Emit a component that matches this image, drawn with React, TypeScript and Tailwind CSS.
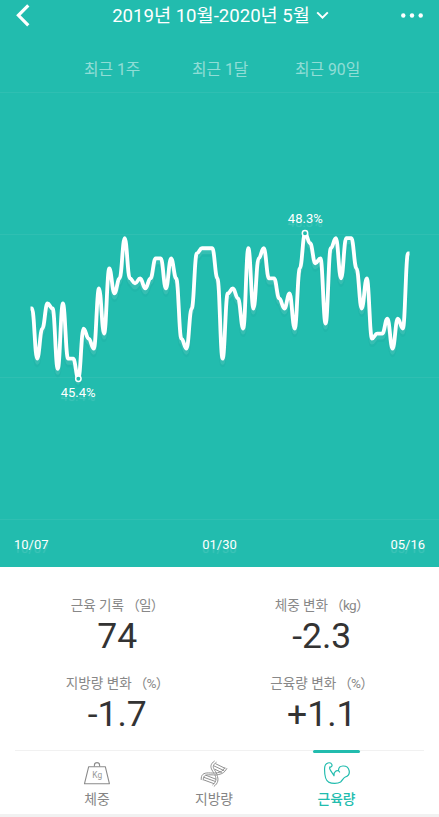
import React from "react";

const values = [
  46.8, 45.8, 46.4, 46.9, 46.8, 45.6, 46.9, 45.8, 45.8, 45.4, 46.4, 46.2, 46.0, 47.2, 46.3,
  47.6, 47.1, 47.4, 48.2, 47.4, 47.3, 47.4, 47.2, 47.4, 47.8, 47.8, 47.2, 47.8, 47.4, 46.2,
  46.0, 46.8, 47.9, 48.0, 48.0, 48.0, 47.4, 45.8, 47.1, 47.2, 47.0, 46.4, 48.0, 46.8, 47.8,
  48.0, 47.4, 47.4, 47.0, 46.8, 47.1, 46.4, 47.6, 48.3, 48.1, 47.7, 47.8, 46.5, 48.0, 48.2,
  47.4, 48.2, 48.2, 47.6, 46.8, 47.4, 46.2, 46.3, 46.3, 46.6, 46.0, 46.6, 46.4, 47.9,
];

const px = (i: number) => 32 + i * 5.151;
// The chart area starts 93px below the top of the screen.
const py = (v: number) => 140.2 + (48.3 - v) * 50.2;

const line = values
  .map((v, i) => {
    if (i === 0) return `M${px(0)} ${py(v)}`;
    const c = 2.2;
    return `C${px(i - 1) + c} ${py(values[i - 1])} ${px(i) - c} ${py(v)} ${px(i)} ${py(v)}`;
  })
  .join(" ");

const labelShadow = "[text-shadow:0_4px_1px_rgba(255,255,255,0.15)]";

function Chart() {
  return (
    <svg width="439" height="427" viewBox="0 0 439 427" className="block overflow-visible">
      {[0, 142, 285, 427].map((y) => (
        <line key={y} x1="0" x2="439" y1={y - 0.5} y2={y - 0.5} stroke="#fff" strokeOpacity="0.06" />
      ))}
      <g fill="none" strokeLinejoin="round">
        <path d={line} stroke="#087f75" strokeOpacity="0.06" strokeWidth="5" transform="translate(0 6)" />
        <path d={line} stroke="#fff" strokeOpacity="0.1" strokeWidth="4" transform="translate(0 4)" />
        <path
          d={`M${px(0) - 1.5} ${py(values[0])}L${line.slice(1)}h1.5`}
          stroke="#fff"
          strokeWidth="3.8"
        />
      </g>
      {[9, 53].map((i) => (
        <circle key={i} cx={px(i)} cy={py(values[i])} r="2.7" fill="#22bcae" stroke="#fff" strokeWidth="1.5" />
      ))}
      <g fill="#fff" fontSize="13" textAnchor="middle" className={labelShadow}>
        <text x="305.3" y="130">48.3%</text>
        <text x="78.2" y="304">45.4%</text>
      </g>
    </svg>
  );
}

function Stat({ label, unit, value, className }: { label: string; unit: string; value: string; className: string }) {
  return (
    <div className={`flex flex-col items-center ${className}`}>
      <span className="text-[13.6px] leading-5 text-[#888] whitespace-nowrap">
        {label}
        <span className="ml-[2px] tracking-[-0.7px]">（{unit}）</span>
      </span>
      <span className="mt-[2px] text-[35.5px] leading-[38px] text-[#333]">{value}</span>
    </div>
  );
}

function WeightIcon() {
  return (
    <svg width="30" height="28" viewBox="0 0 30 28" fill="none" stroke="#8a8a8a" strokeWidth="1.1" strokeLinejoin="round">
      <path d="M6.7 6.7H23.3L27.4 23.7H2.5Z" />
      <path d="M12.4 6.5V5.2a2.6 2.6 0 0 1 5.2 0V6.5" />
      <text x="15.2" y="17.8" fontSize="8.4" textAnchor="middle" fill="#999" stroke="none">Kg</text>
    </svg>
  );
}

function DnaIcon() {
  return (
    <svg width="30" height="28" viewBox="0 0 30 28" fill="none" stroke="#8a8a8a" strokeWidth="0.95" strokeLinecap="round">
      <path d="M2.2 19.5C2 14.5 4.5 12.9 9.5 12.9C15 12.9 22 14.6 25.8 7.8" />
      <path d="M4.2 20C4.2 16 6 14.8 9.5 14.8C16 14.8 24.3 16.2 27.8 8.6" />
      <path d="M15.3 1.2C11.3 3.8 11.3 7 13 10C14.1 12 14.4 12.3 14.6 13" />
      <path d="M17.2 2.4C13.7 4.8 13.7 7 15.2 9.4C16 10.8 17 12.2 17.6 13.6" />
      <path d="M16 15.2C17.8 18.8 17.2 22.2 13.8 24.8M18 15.2C19.9 19.3 19.2 23.4 15.2 26.2" />
      <path d="M16.8 3.8L26 8.3M15.2 6L25 10.6M16 9.3L22.4 12.4" />
      <path d="M7 15.3L16.8 19.2M5.1 17.4L16.2 21.4M5 20L14.8 23.6" />
    </svg>
  );
}

function MuscleIcon() {
  return (
    <svg width="30" height="28" viewBox="0 0 30 28" fill="none" stroke="#22bcae" strokeWidth="1.2" strokeLinecap="round" strokeLinejoin="round">
      <path d="M7.9 7.1C9 7.2 10.3 6.4 10 4.9C9.5 3 7.7 2.4 5.9 3C3.5 3.8 2.7 5.3 2.6 8.2C2.4 14.4 3.8 20.4 6.6 22.1C10 23.8 15.6 23.8 18.6 22C20.4 20.5 21.4 17.7 23.3 17C26.2 16.1 27.7 13.9 27.2 10.9C26.6 7.7 23.8 5.9 20.9 6C18.1 6.1 16.5 7.8 16.5 10.4" />
      <path d="M7.9 7.1C6.9 8.7 8.3 10 9.2 11.4L12 15.8C11.8 13.8 12.4 12 13.6 11.2C15.1 10.2 16.9 10.8 17.6 12" />
    </svg>
  );
}

function Tab({ label, active, className, children }: { label: string; active?: boolean; className: string; children: React.ReactNode }) {
  return (
    <div className={`flex flex-col items-center ${className}`}>
      <div className={`h-[3px] w-[47px] rounded-sm ${active ? "bg-[#22bcae]" : "bg-transparent"}`} />
      <div className="mt-[7px] h-7">{children}</div>
      <span className={`mt-px text-[13.8px] leading-5 ${active ? "font-medium text-[#22bcae]" : "text-[#858585]"}`}>{label}</span>
    </div>
  );
}

export default function App() {
  return (
    <div className="flex h-[817px] w-[439px] flex-col overflow-hidden bg-white font-['Roboto','Noto_Sans_CJK_KR',sans-serif]">
      <header className="h-[567px] shrink-0 bg-[#22bcae] text-white">
        <div className="flex h-[31px] items-center justify-between pr-4 pl-[15px]">
          <svg width="15" height="24" viewBox="0 0 15 24" fill="none" stroke="#fff" strokeWidth="3.2">
            <path d="M13.3 1.3L3.4 11.3L13.3 21.3" />
          </svg>
          <div className="flex items-center gap-[6px] pl-[10px]">
            <span className="pt-px text-[18.6px] leading-[30px] whitespace-nowrap">2019년 10월-2020년 5월</span>
            <svg width="13" height="10" viewBox="0 0 13 10" fill="none" stroke="#fff" strokeWidth="2">
              <path d="M1.2 1.4L6.5 6.6L11.8 1.4" />
            </svg>
          </div>
          <svg width="22" height="6" viewBox="0 0 22 6" fill="#fff">
            <circle cx="2.3" cy="2.5" r="2.2" />
            <circle cx="11" cy="2.5" r="2.2" />
            <circle cx="19.7" cy="2.5" r="2.2" />
          </svg>
        </div>
        <nav className="flex h-[62px] items-center pt-[15px] pl-[84px] text-[15.8px] text-white/50">
          <span className="w-[108px]">최근 1주</span>
          <span className="w-[103px]">최근 1달</span>
          <span>최근 90일</span>
        </nav>
        <Chart />
        <div className={`flex items-center justify-between px-[14px] pt-[15px] text-[13px] leading-5 ${labelShadow}`}>
          <span>10/07</span>
          <span>01/30</span>
          <span>05/16</span>
        </div>
      </header>
      <section className="grid h-[183px] shrink-0 grid-cols-2 content-start gap-y-[18px] pt-7">
        <Stat label="근육 기록" unit="일" value="74" className="pl-[15px]" />
        <Stat label="체중 변화" unit="kg" value="-2.3" className="pr-[15px]" />
        <Stat label="지방량 변화" unit="%" value="-1.7" className="pl-[15px]" />
        <Stat label="근육량 변화" unit="%" value="+1.1" className="pr-[15px]" />
      </section>
      <footer className="h-16 shrink-0 px-[15px]">
        <div className="h-px bg-[#f1f1f1]" />
        <div className="-mt-px flex pl-[22px]">
          <Tab label="체중" className="w-[120px]"><WeightIcon /></Tab>
          <Tab label="지방량" className="w-[114px]"><DnaIcon /></Tab>
          <Tab label="근육량" active className="w-[131px]"><MuscleIcon /></Tab>
        </div>
      </footer>
      <div className="h-[3px] shrink-0 bg-[#f1f1f1]" />
    </div>
  );
}
